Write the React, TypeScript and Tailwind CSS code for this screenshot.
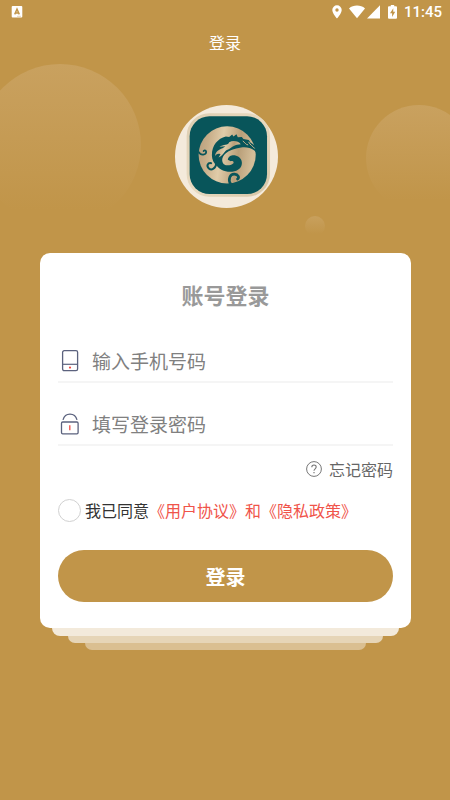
import React from "react";

function StatusBar() {
  return (
    <div className="flex h-6 items-center justify-between pl-[11px] pr-2 text-white">
      <svg className="size-3" viewBox="0 0 12 12" aria-hidden="true">
        <rect x="0.7" y="0" width="10.6" height="11.6" rx="1" fill="#fff" />
        <path d="M3.7 8.4 6 3.1l2.3 5.3M4.5 7h3" fill="none" stroke="#c19549" strokeWidth="1.4" />
        <path d="M6 10.3h4" stroke="#e0cba6" strokeWidth="0.8" />
      </svg>
      <div className="flex items-center">
        <svg className="mr-[7px] h-[14px] w-[10px]" viewBox="0 0 10 14" fill="#fff" aria-hidden="true">
          <path fillRule="evenodd" d="M5 .3A4.7 4.7 0 0 0 .3 5C.3 8.500 5 13.500 5 13.500S9.700 8.500 9.700 5A4.700 4.700 0 0 0 5 .3Zm0 3a1.700 1.700 0 1 1 0 3.400 1.700 1.700 0 0 1 0-3.400Z" />
        </svg>
        <svg className="mr-[2px] h-[14px] w-4" viewBox="0 0 16 14" fill="#fff" aria-hidden="true">
          <path d="M0 3.400C2.200 1.600 5 .6 8 .6s5.800 1 8 2.800L8 13.300Z" />
        </svg>
        <svg className="mr-2 h-[14px] w-[13px]" viewBox="0 0 13 14" fill="#fff" aria-hidden="true">
          <path d="M13 .3v13.200H0Z" />
        </svg>
        <svg className="mr-[7px] h-[14px] w-[9px]" viewBox="0 0 9 14" aria-hidden="true">
          <path d="M2.800 0h3.400v1.300H8a1 1 0 0 1 1 1v10.400a1 1 0 0 1-1 1H1a1 1 0 0 1-1-1V2.300a1 1 0 0 1 1-1h1.800Z" fill="#fff" />
          <path d="M5.300 3.200 2 8.200h2.100v3.700L7.200 6.800H5.200Z" fill="#c19549" />
        </svg>
        <span className="font-[Roboto,sans-serif] text-[15px] font-medium leading-6">11:45</span>
      </div>
    </div>
  );
}

function Logo() {
  return (
    <svg className="size-[103px]" viewBox="27 29 310 310" role="img" aria-label="Logo">
      <defs>
        <linearGradient id="gold" x1="0" x2="1" y1="0" y2="0.15">
          <stop offset="0" stopColor="#b59c7c" />
          <stop offset="0.2" stopColor="#c8ae89" />
          <stop offset="0.45" stopColor="#e0cca9" />
          <stop offset="0.75" stopColor="#b99f79" />
          <stop offset="1" stopColor="#d3bd98" />
        </linearGradient>
        <linearGradient id="frame" x1="0" x2="1" y1="0" y2="1">
          <stop offset="0" stopColor="#ddcdb0" />
          <stop offset="0.5" stopColor="#e8dac0" />
          <stop offset="1" stopColor="#d6c5a5" />
        </linearGradient>
      </defs>
      <circle cx="182" cy="184" r="155" fill="#f4eadb" />
      <rect x="62" y="54" width="251" height="251" rx="68" fill="url(#frame)" />
      <rect x="71" y="63" width="233" height="234" rx="60" fill="#08555a" />
      <circle cx="184" cy="179" r="86" fill="url(#gold)" />
      <path
        fill="#08555a"
        d="M138 180C138 150 156 130 180 124L190 125 199 118 203 124 212 117 216 126 228 125 233 131 249 134 254 142 266 150 273 161 278 181 266 166C254 157 239 155 226 157 205 160 190 166 180 174 169 183 165 198 174 207 183 213 194 211 201 206 206 202 203 196 195 198L186 194C187 183 199 179 209 181 222 184 230 194 228 207 226 221 211 230 193 230 174 230 160 222 152 211 144 204 138 193 138 180Z"
      />
      <path fill="url(#gold)" d="M147 184C149 168 158 164 170 159L179 153 161 155C172 146 188 151 190 141 202 134 218 137 225 147 208 147 199 156 187 163 175 166 176 179 158 187L164 177C156 174 150 178 147 184Z" />
      <path fill="none" stroke="#cbb38d" strokeWidth="3" strokeLinecap="round" d="M232 138C238 142 239 148 246 149M249 141C253 150 261 152 266 159" />
      <path fill="none" stroke="#08555a" strokeLinecap="round" strokeWidth="6" d="M151 205C150 220 137 227 129 220 121 213 125 202 136 204" />
      <path fill="none" stroke="#08555a" strokeLinecap="round" strokeWidth="5" d="M99 171C104 182 121 180 121 170 120 164 113 165 113 168" />
      <path fill="none" stroke="#08555a" strokeLinecap="round" strokeWidth="8" d="M195 268C185 252 193 236 206 237 217 238 222 247 215 252" />
    </svg>
  );
}

function PhoneIcon() {
  return (
    <svg className="h-[22px] w-6 shrink-0" viewBox="0 0 24 22" fill="none" aria-hidden="true">
      <rect x="4.600" y="0.700" width="15" height="20" rx="1.600" stroke="#5b627e" strokeWidth="1.300" />
      <path d="M5 14.300h14.500" stroke="#5b627e" strokeWidth="1.200" />
      <circle cx="12" cy="17.600" r="1.100" fill="#f04a43" />
    </svg>
  );
}

function LockIcon() {
  return (
    <svg className="h-[22px] w-6 shrink-0" viewBox="0 0 24 22" fill="none" aria-hidden="true">
      <rect x="3.500" y="9" width="16.600" height="11.800" rx="1.200" stroke="#5b627e" strokeWidth="1.300" />
      <path d="M5 6.800C6 3.200 8.700 1.200 12 1.200s6 2 7 5.600" stroke="#5b627e" strokeWidth="1.300" />
      <path d="M11.800 12.300v5" stroke="#f04a43" strokeWidth="1.300" />
    </svg>
  );
}

interface FieldProps {
  id: string;
  type: string;
  label: string;
  icon: React.ReactNode;
}

function Field({ id, type, label, icon }: FieldProps) {
  return (
    <div className="flex h-11 items-center border-b-2 border-[#f5f5f5]">
      <label htmlFor={id} aria-label={label} className="pt-0.5">{icon}</label>
      <input
        id={id}
        type={type}
        placeholder={label}
        className="ml-[10px] h-10 min-w-0 flex-1 bg-transparent text-[19px] text-[#333] outline-none placeholder:text-[#808080]"
      />
    </div>
  );
}

export default function App() {
  return (
    <div className="relative min-h-screen overflow-hidden bg-[#c19549] font-[Noto_Sans_CJK_SC,sans-serif]">
      <div className="absolute -left-[21px] top-16 size-[162px] rounded-full bg-linear-to-b from-[#c9a15f] to-[#c19549] to-90%" />
      <div className="absolute -right-[22px] top-[105px] size-[106px] rounded-full bg-linear-to-b from-[#c9a15f] to-[#c19549] to-90%" />
      <div className="absolute left-[305px] top-[216px] size-5 rounded-full bg-linear-to-b from-[#c8a05d] to-[#c19549] to-90%" />

      <div className="relative">
        <StatusBar />
        <h1 className="py-1.5 text-center text-base leading-6 text-white">登录</h1>
        <div className="mt-[45px] flex justify-center pl-0.5">
          <Logo />
        </div>

        <main className="mt-[45px] pl-10 pr-[39px]">
          <form className="rounded-[10px] bg-white px-[18px] pb-[26px] pt-[25px]" onSubmit={(e) => e.preventDefault()}>
            <h2 className="text-center text-[22px] font-bold leading-8 text-[#999]">账号登录</h2>
            <div className="mt-[29px] flex flex-col gap-[19px]">
              <Field id="phone" type="tel" label="输入手机号码" icon={<PhoneIcon />} />
              <Field id="password" type="password" label="填写登录密码" icon={<LockIcon />} />
            </div>

            <div className="mt-[11px] flex justify-end">
              <a href="#forgot" className="flex items-center gap-[7px] text-base leading-6 text-[#666]">
                <svg className="size-4" viewBox="0 0 16 16" fill="none" stroke="#777" aria-hidden="true">
                  <circle cx="8" cy="8" r="7.400" strokeWidth="1" />
                  <path d="M5.800 6.300C5.800 3.300 10.200 3.300 10.200 6.100 10.200 7.800 8 7.900 8 9.700" strokeWidth="1.100" />
                  <path d="M8 11v1.200" strokeWidth="1.200" />
                </svg>
                忘记密码
              </a>
            </div>

            <div className="mt-[17px] flex items-center text-base leading-6 text-[#333]">
              <input
                id="agree"
                type="checkbox"
                className="mr-1 size-[23px] shrink-0 appearance-none rounded-full border border-[#d1d1d1] bg-white checked:bg-[#c19549]"
              />
              <label htmlFor="agree" className="whitespace-nowrap">
                我已同意<span className="text-[#f0544a]"><a href="#terms">《用户协议》</a>和<a href="#privacy">《隐私政策》</a></span>
              </label>
            </div>

            <button type="submit" className="mt-7 h-[52px] w-full rounded-full bg-[#c19549] pt-0.5 text-xl font-bold text-white">
              登录
            </button>
          </form>
          <div className="mx-3 h-2 rounded-b-lg bg-[#f3eadb]" />
          <div className="mx-7 h-[7px] rounded-b-lg bg-[#e6d5b7]" />
          <div className="mx-[45px] h-[7px] rounded-b-lg bg-[#dabf91]" />
        </main>
      </div>
    </div>
  );
}
